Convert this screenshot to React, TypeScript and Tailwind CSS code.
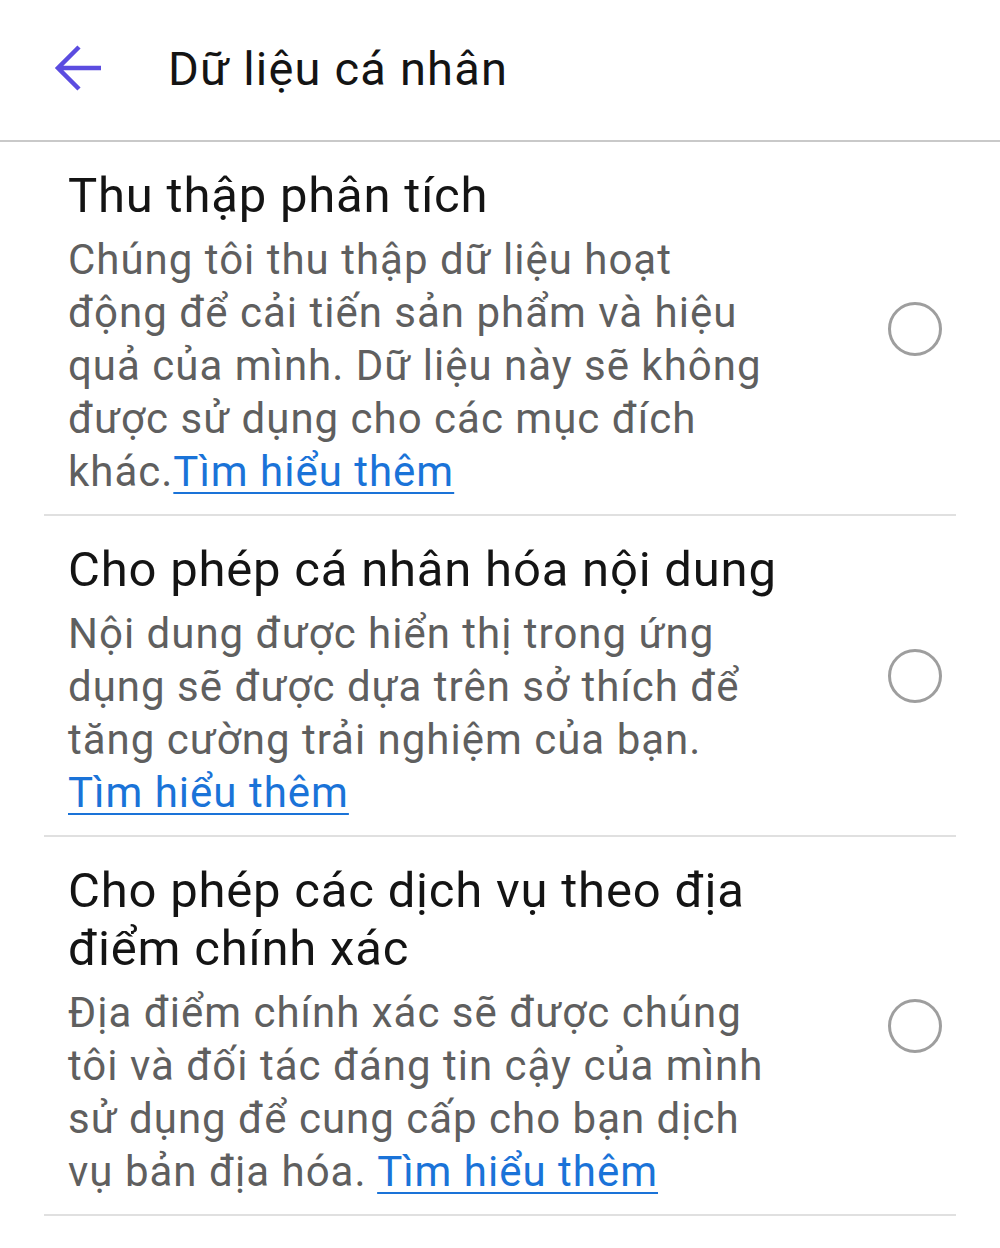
type Section = {
  title: string[]
  lines: string[]
  tail: string
}

const sections: Section[] = [
  {
    title: ['Thu thập phân tích'],
    lines: [
      'Chúng tôi thu thập dữ liệu hoạt',
      'động để cải tiến sản phẩm và hiệu',
      'quả của mình. Dữ liệu này sẽ không',
      'được sử dụng cho các mục đích',
    ],
    tail: 'khác.',
  },
  {
    title: ['Cho phép cá nhân hóa nội dung'],
    lines: [
      'Nội dung được hiển thị trong ứng',
      'dụng sẽ được dựa trên sở thích để',
      'tăng cường trải nghiệm của bạn.',
    ],
    tail: '',
  },
  {
    title: ['Cho phép các dịch vụ theo địa', 'điểm chính xác'],
    lines: [
      'Địa điểm chính xác sẽ được chúng',
      'tôi và đối tác đáng tin cậy của mình',
      'sử dụng để cung cấp cho bạn dịch',
    ],
    tail: 'vụ bản địa hóa. ',
  },
]

export default function App() {
  return (
    <div className="min-h-screen bg-white font-['Roboto',sans-serif]">
      {/* top bar */}
      <div className="flex h-[142px] items-center border-b-2 border-[#c9c9c9] pb-[4px]">
        <div className="flex w-[168px] items-center pl-[54px]">
          <svg width="50" height="48" viewBox="0 0 50 48" fill="none">
            <path
              d="M25 3 L4 24 L25 45 M4 24 H47"
              stroke="#5b4ce0"
              strokeWidth="4.5"
              strokeLinecap="butt"
              strokeLinejoin="miter"
            />
          </svg>
        </div>
        <h1 className="text-[47px] leading-none tracking-[1.2px] text-[#141414]">Dữ liệu cá nhân</h1>
      </div>

      <div className="px-[44px]">
        {sections.map((s) => (
          <div
            key={s.title[0]}
            className="flex items-center border-b-2 border-[#e0e0e0] pt-[25px] pb-[16px] pl-[24px] pr-[14px]"
          >
            <div className="flex-1 whitespace-nowrap">
              {s.title.map((t) => (
                <div key={t} className="text-[49px] leading-[58px] tracking-[0.8px] text-[#141414]">
                  {t}
                </div>
              ))}
              <div className="mt-[8px] text-[42px] leading-[53px] tracking-[1px] text-[#5f5f5f]">
                {s.lines.map((l) => (
                  <div key={l}>{l}</div>
                ))}
                <div>
                  {s.tail}
                  <a href="#" className="text-[#1a73d8] underline decoration-2 underline-offset-[6px]">
                    Tìm hiểu thêm
                  </a>
                </div>
              </div>
            </div>
            <div className="mb-[8px] h-[54px] w-[54px] shrink-0 rounded-full border-[3px] border-[#9e9e9e]" />
          </div>
        ))}
      </div>
    </div>
  )
}
